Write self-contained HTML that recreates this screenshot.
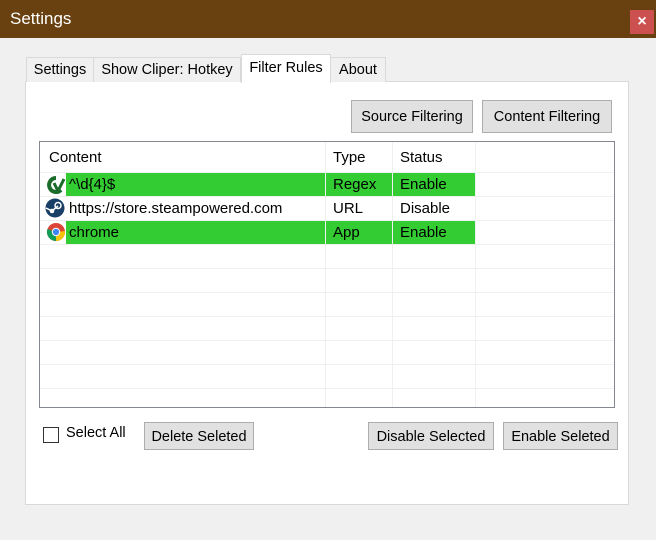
<!DOCTYPE html>
<html><head><meta charset="utf-8"><style>
*{margin:0;padding:0;box-sizing:border-box}
body{width:656px;height:540px;background:#f0f0f0;font-family:"Segoe UI","Liberation Sans",sans-serif;font-size:14.5px;color:#000;position:relative;overflow:hidden}
.a{position:absolute}
.title{left:0;top:0;width:656px;height:38px;background:#694110;color:#fff;font-size:17px;line-height:38px;padding-left:10px}
.close{left:630px;top:10px;width:24px;height:24px;background:#cc5050;color:#fff;text-align:center;line-height:24px;font-size:16px;font-weight:bold}
.panel{left:25px;top:81px;width:604px;height:424px;background:#fff;border:1px solid #d9d9d9}
.tab{top:57px;height:25px;background:#f0f0f0;border:1px solid #d9d9d9;border-bottom:none;text-align:center;line-height:25px}
.btn{background:#e1e1e1;border:1px solid #adadad;text-align:center}
.list{left:39px;top:141px;width:576px;height:267px;border:1px solid #828790;background:#fff;overflow:hidden;font-size:15px}
.hl{left:0;width:574px;height:1px;background:#f0f0f0}
.vl{top:0;width:1px;height:267px;background:#f0f0f0}
.g{background:#33cc33;height:23px}
.t{line-height:24px}
</style></head><body>
<div class="a title">Settings</div>
<div class="a close">×</div>
<div class="a panel"></div>
<div class="a tab" style="left:26px;width:68px">Settings</div>
<div class="a tab" style="left:93px;width:148px">Show Cliper: Hotkey</div>
<div class="a tab" style="left:330px;width:56px">About</div>
<div class="a tab" style="left:241px;top:54px;height:29px;width:90px;background:#fff;line-height:26px">Filter Rules</div>
<div class="a btn" style="left:351px;top:100px;width:122px;height:33px;line-height:33px">Source Filtering</div>
<div class="a btn" style="left:482px;top:100px;width:130px;height:33px;line-height:33px">Content Filtering</div>
<div class="a list">
 <div class="a vl" style="left:285px"></div><div class="a vl" style="left:352px"></div><div class="a vl" style="left:435px"></div>
 <div class="a hl" style="top:30px"></div><div class="a hl" style="top:54px"></div><div class="a hl" style="top:78px"></div><div class="a hl" style="top:102px"></div><div class="a hl" style="top:126px"></div><div class="a hl" style="top:150px"></div><div class="a hl" style="top:174px"></div><div class="a hl" style="top:198px"></div><div class="a hl" style="top:222px"></div><div class="a hl" style="top:246px"></div>
 <div class="a t" style="left:9px;top:4px">Content</div>
 <div class="a t" style="left:293px;top:4px">Type</div>
 <div class="a t" style="left:360px;top:4px">Status</div>
 <div class="a g" style="left:26px;top:31px;width:259px"></div><div class="a g" style="left:286px;top:31px;width:66px"></div><div class="a g" style="left:353px;top:31px;width:82px"></div>
 <div class="a g" style="left:26px;top:79px;width:259px"></div><div class="a g" style="left:286px;top:79px;width:66px"></div><div class="a g" style="left:353px;top:79px;width:82px"></div>
 <svg class="a" style="left:6px;top:33px" width="20" height="20" viewBox="0 0 20 20"><path d="M10 3a7 7 0 1 0 5 12" fill="none" stroke="#1b6b2a" stroke-width="4"/><path d="M8 8l4 8 6-12" fill="none" stroke="#1b6b2a" stroke-width="3"/></svg>
 <svg class="a" style="left:5px;top:56px" width="20" height="20" viewBox="0 0 20 20"><circle cx="10" cy="10" r="9.5" fill="#1a3f66"/><circle cx="13" cy="7.5" r="3" fill="none" stroke="#fff" stroke-width="1.5"/><circle cx="7" cy="13" r="2.3" fill="#fff"/><path d="M1 10l6 3l6-5" stroke="#fff" stroke-width="1.5" fill="none"/></svg>
 <svg class="a" style="left:6px;top:80px" width="20" height="20" viewBox="0 0 20 20"><circle cx="10" cy="10" r="9" fill="#db4437"/><path d="M10 10L1.5 7A9 9 0 0 0 10 19Z" fill="#0f9d58"/><path d="M10 10L19 9A9 9 0 0 1 10 19Z" fill="#f4c20d"/><circle cx="10" cy="10" r="4.2" fill="#fff"/><circle cx="10" cy="10" r="3.2" fill="#4285f4"/></svg>
 <div class="a t" style="left:29px;top:31px">^\d{4}$</div>
 <div class="a t" style="left:293px;top:31px">Regex</div>
 <div class="a t" style="left:360px;top:31px">Enable</div>
 <div class="a t" style="left:29px;top:55px">https://store.steampowered.com</div>
 <div class="a t" style="left:293px;top:55px">URL</div>
 <div class="a t" style="left:360px;top:55px">Disable</div>
 <div class="a t" style="left:29px;top:79px">chrome</div>
 <div class="a t" style="left:293px;top:79px">App</div>
 <div class="a t" style="left:360px;top:79px">Enable</div>
</div>
<div class="a" style="left:43px;top:427px;width:16px;height:16px;border:1px solid #333;background:#fff"></div>
<div class="a" style="left:66px;top:425px">Select All</div>
<div class="a btn" style="left:144px;top:422px;width:110px;height:28px;line-height:28px">Delete Seleted</div>
<div class="a btn" style="left:368px;top:422px;width:126px;height:28px;line-height:28px">Disable Selected</div>
<div class="a btn" style="left:503px;top:422px;width:115px;height:28px;line-height:28px">Enable Seleted</div>
</body></html>
